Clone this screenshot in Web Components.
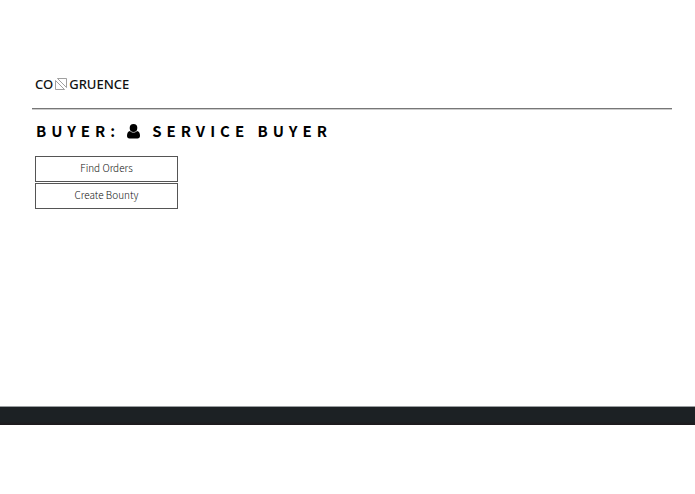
<!DOCTYPE html>
<html lang="en">
<head>
<meta charset="utf-8">
<title>Congruence</title>
<style>
  body {
    margin: 0;
    background: #fff;
    color: #000;
    font-family: "Noto Sans CJK SC", "Noto Sans", sans-serif;
  }
</style>
</head>
<body>
<buyer-page>
  <brand-logo slot="header"></brand-logo>
  <role-heading role-name="Buyer">Service Buyer</role-heading>
  <action-menu>
    <action-button>Find Orders</action-button>
    <action-button>Create Bounty</action-button>
  </action-menu>
</buyer-page>

<script>
class BuyerPage extends HTMLElement {
  constructor() {
    super();
    this.attachShadow({ mode: 'open' });
    this.shadowRoot.innerHTML = `
      <style>
        :host {
          display: block;
        }
        header {
          margin: 0 23px 0 32px;
          padding: 76px 3px 16px;
          border-bottom: 1px solid #777;
          box-shadow: 0 1px #ccc;
        }
        main {
          min-height: 297px;
          padding: 12px 32px 0 35px;
          box-sizing: border-box;
        }
        footer {
          height: 18px;
          border-top: 1px solid #9a9ea0;
          background: linear-gradient(#1c2124 80%, #1d191c);
        }
      </style>
      <header><slot name="header"></slot></header>
      <main><slot></slot></main>
      <footer></footer>
    `;
  }
}

class BrandLogo extends HTMLElement {
  constructor() {
    super();
    this.attachShadow({ mode: 'open' });
    this.shadowRoot.innerHTML = `
      <style>
        :host {
          display: block;
        }
        a {
          display: flex;
          align-items: center;
          gap: 1px;
          height: 16px;
          color: #111;
          font: 500 13px/16px "Noto Sans", sans-serif;
          text-decoration: none;
        }
        svg {
          width: 14px;
          height: 14px;
          fill: none;
          stroke: #888;
        }
      </style>
      <a href="#" aria-label="Congruence">
        <span>CO</span>
        <svg viewBox="0 0 14 14" aria-hidden="true">
          <path d="M1.5 3.5v9h9z M3.5 1.5h9v9z" stroke-width="0.8"/>
        </svg>
        <span>GRUENCE</span>
      </a>
    `;
  }
}

class RoleHeading extends HTMLElement {
  constructor() {
    super();
    this.attachShadow({ mode: 'open' });
  }

  connectedCallback() {
    this.shadowRoot.innerHTML = `
      <style>
        :host {
          display: block;
        }
        h1 {
          display: flex;
          align-items: center;
          margin: 0;
          padding-left: 1px;
          font-size: 15px;
          font-weight: 700;
          line-height: 20px;
          letter-spacing: 5px;
          text-transform: uppercase;
        }
        svg {
          width: 13px;
          height: 15px;
          margin: 0 12px 0 7px;
        }
      </style>
      <h1>
        <span>${this.getAttribute('role-name')}:</span>
        <svg viewBox="0 0 13 15" aria-hidden="true">
          <ellipse cx="6.5" cy="4" rx="3.8" ry="4"/>
          <path d="M3 7C1 7.2 0 9 0 11.8C0 13.6 1 14.6 2.4 14.6h8.2c1.4 0 2.4-1 2.4-2.8C13 9 12 7.2 10 7C9 8.2 7.8 8.6 6.5 8.6S4 8.2 3 7z"/>
        </svg>
        <span><slot></slot></span>
      </h1>
    `;
  }
}

class ActionMenu extends HTMLElement {
  constructor() {
    super();
    this.attachShadow({ mode: 'open' });
    this.shadowRoot.innerHTML = `
      <style>
        :host {
          display: grid;
          grid-template-columns: 143px;
          gap: 1px;
          margin-top: 15px;
        }
      </style>
      <slot></slot>
    `;
  }
}

class ActionButton extends HTMLElement {
  constructor() {
    super();
    this.attachShadow({ mode: 'open' });
    this.shadowRoot.innerHTML = `
      <style>
        :host {
          display: block;
        }
        button {
          display: block;
          width: 100%;
          height: 26px;
          padding: 0 0 2px;
          border: 1px solid #555;
          background: #fff;
          color: #111;
          font-family: inherit;
          font-size: 10px;
          font-weight: 300;
          line-height: 20px;
          cursor: pointer;
        }
      </style>
      <button type="button"><slot></slot></button>
    `;
  }
}

customElements.define('buyer-page', BuyerPage);
customElements.define('brand-logo', BrandLogo);
customElements.define('role-heading', RoleHeading);
customElements.define('action-menu', ActionMenu);
customElements.define('action-button', ActionButton);
</script>
</body>
</html>
